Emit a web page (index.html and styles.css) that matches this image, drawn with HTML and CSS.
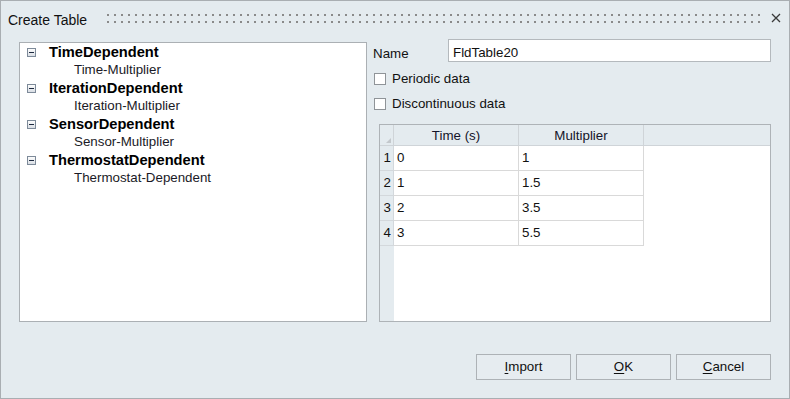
FILE: index.html
```html
<!DOCTYPE html>
<html>
<head>
<meta charset="utf-8">
<link rel="stylesheet" href="styles.css">
</head>
<body>
<div class="dialog">
  <div class="titlebar">
    <span class="title">Create Table</span>
    <span class="grip"></span>
    <svg class="close" width="10" height="10" viewBox="0 0 10 10"><path d="M1 1L9 9M9 1L1 9" stroke="#3a3a3a" stroke-width="1.3" fill="none"/></svg>
  </div>
  <div class="main">
    <div class="tree">
      <div class="node"><span class="toggle"></span><span class="node-label">TimeDependent</span></div>
      <div class="leaf">Time-Multiplier</div>
      <div class="node"><span class="toggle"></span><span class="node-label">IterationDependent</span></div>
      <div class="leaf">Iteration-Multiplier</div>
      <div class="node"><span class="toggle"></span><span class="node-label">SensorDependent</span></div>
      <div class="leaf">Sensor-Multiplier</div>
      <div class="node"><span class="toggle"></span><span class="node-label">ThermostatDependent</span></div>
      <div class="leaf">Thermostat-Dependent</div>
    </div>
    <div class="form">
      <div class="name-row">
        <span class="name-label">Name</span>
        <div class="input">FldTable20</div>
      </div>
      <div class="check first"><span class="box"></span><span>Periodic data</span></div>
      <div class="check second"><span class="box"></span><span>Discontinuous data</span></div>
      <div class="table">
        <div class="corner"></div>
        <div class="hcell">Time (s)</div>
        <div class="hcell">Multiplier</div>
        <div class="hfill"></div>

        <div class="rh">1</div><div class="cell">0</div><div class="cell">1</div><div class="blank"></div>
        <div class="rh">2</div><div class="cell">1</div><div class="cell">1.5</div><div class="blank"></div>
        <div class="rh">3</div><div class="cell">2</div><div class="cell">3.5</div><div class="blank"></div>
        <div class="rh">4</div><div class="cell">3</div><div class="cell">5.5</div><div class="blank"></div>

        <div class="rh-fill"></div><div class="blank"></div><div class="blank"></div><div class="blank"></div>
      </div>
    </div>
  </div>
  <div class="buttons">
    <div class="btn"><u>I</u>mport</div>
    <div class="btn"><u>O</u>K</div>
    <div class="btn"><u>C</u>ancel</div>
  </div>
</div>
</body>
</html>
```
FILE: styles.css
```css
* { box-sizing: border-box; }
html, body { margin: 0; padding: 0; }
body {
  font-family: "Liberation Sans", Arial, sans-serif;
  font-size: 13.33px;
  color: #111;
  background: #e4ebef;
}
.dialog {
  width: 790px;
  height: 399px;
  border: 1px solid #a9aeb2;
  background: #e4ebef;
  display: flex;
  flex-direction: column;
}
.titlebar {
  height: 38px;
  display: flex;
  align-items: flex-start;
  padding-left: 7px;
  padding-right: 8px;
}
.title {
  font-size: 14px;
  line-height: 16px;
  color: #111;
  margin-top: 11px;
}
.grip {
  flex: 1;
  height: 9px;
  margin-top: 13px;
  margin-left: 20px;
  margin-right: 7px;
  background-image:
    linear-gradient(to right, transparent 2px, #e4ebef 2px),
    linear-gradient(to bottom, #8a8a8a 2px, #e4ebef 2px);
  background-size: 7px 7px;
  background-repeat: repeat;
}
.close { display: block; margin-top: 12px; }

.main {
  height: 283px;
  display: flex;
  padding: 0 18px;
}
.tree {
  width: 348px;
  height: 280px;
  margin-top: 3px;
  background: #fff;
  border: 1px solid #abb0b4;
}
.node {
  height: 18px;
  display: flex;
  align-items: center;
  padding-left: 7px;
}
.toggle {
  width: 9px;
  height: 9px;
  border: 1px solid #7d8a99;
  background: linear-gradient(#fdfdfd, #d9dee4);
  position: relative;
  margin-right: 13px;
}
.toggle::after {
  content: "";
  position: absolute;
  left: 1px;
  top: 3px;
  width: 5px;
  height: 1px;
  background: #1d2a40;
}
.node-label {
  font-weight: bold;
  font-size: 14.67px;
  color: #000;
}
.leaf {
  height: 18px;
  line-height: 18px;
  padding-left: 54px;
  color: #1a1a26;
}

.form {
  flex: 1;
  display: flex;
  flex-direction: column;
}
.name-row {
  height: 23px;
  display: flex;
  align-items: center;
}
.name-label {
  width: 81px;
  padding-left: 6px;
  padding-top: 5px;
}
.input {
  flex: 1;
  height: 23px;
  background: #fff;
  border: 1px solid #b4b9bd;
  padding-left: 4px;
  line-height: 25px;
}
.check {
  display: flex;
  align-items: center;
  height: 13px;
  padding-left: 7px;
}
.check.first { margin-top: 10px; }
.check.second { margin-top: 12px; }
.box {
  width: 12px;
  height: 12px;
  border: 1px solid #8f9498;
  background: #fff;
  margin-right: 6px;
}
.table {
  flex: 1;
  margin-top: 14px;
  margin-left: 12px;
  border: 1px solid #aeb3b7;
  background: #fff;
  display: grid;
  grid-template-columns: 14px 125px 125px 1fr;
  grid-template-rows: 21px repeat(4, 25px) 1fr;
}
.corner {
  background: #e4ebef;
  border-right: 1px solid #cfd4d8;
  border-bottom: 1px solid #cfd4d8;
  position: relative;
}
.corner::after {
  content: "";
  position: absolute;
  right: 2px;
  bottom: 2px;
  width: 0;
  height: 0;
  border-left: 5px solid transparent;
  border-bottom: 5px solid #c3c8cc;
}
.hcell {
  background: #e4ebef;
  border-right: 1px solid #cfd4d8;
  border-bottom: 1px solid #cfd4d8;
  text-align: center;
  line-height: 21px;
  color: #14142a;
}
.hfill {
  background: #e4ebef;
  border-bottom: 1px solid #cfd4d8;
}
.rh {
  background: #e4ebef;
  border-right: 1px solid #d3d8dc;
  border-bottom: 1px solid #d3d8dc;
  text-align: right;
  padding-right: 2px;
  line-height: 24px;
}
.cell {
  border-right: 1px solid #d9d9d9;
  border-bottom: 1px solid #d9d9d9;
  padding-left: 3px;
  line-height: 24px;
}
.blank { background: #fff; }
.rh-fill { background: #e4ebef; }

.buttons {
  display: flex;
  justify-content: flex-end;
  gap: 5px;
  padding-right: 18px;
  margin-top: 32px;
}
.btn {
  width: 95px;
  height: 26px;
  border: 1px solid #adb2b6;
  background: #e6ecf0;
  text-align: center;
  line-height: 24px;
  color: #111;
}
.btn u { text-decoration: underline; text-underline-offset: 2px; }
```
